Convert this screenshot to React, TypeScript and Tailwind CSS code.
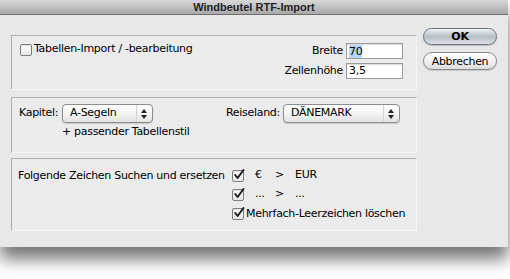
import React from "react";

const font = { fontFamily: '"DejaVu Sans", "Liberation Sans", sans-serif' };

const Checkbox = ({ checked }: { checked?: boolean }) => (
  <span className="relative inline-block w-[12px] h-[12px] shrink-0 rounded-[2px] border border-[#7d7d7d] bg-gradient-to-b from-white to-[#e6e6e6] shadow-[inset_0_1px_1px_rgba(0,0,0,0.12)]">
    {checked && (
      <svg viewBox="0 0 12 12" className="absolute left-[0px] top-[-2px] w-[12px] h-[12px] overflow-visible">
        <path d="M2.2 6 L4.6 9 L10.5 1" fill="none" stroke="#1e1e1e" strokeWidth="2" strokeLinecap="round" strokeLinejoin="round" />
      </svg>
    )}
  </span>
);

const Popup = ({ value, width }: { value: string; width: string }) => (
  <div className={`flex items-center h-[19px] ${width} rounded-[4px] border border-[#8c8c8c] bg-gradient-to-b from-white via-[#f4f4f4] to-[#e2e2e2] shadow-[0_1px_1px_rgba(0,0,0,0.15)]`}>
    <span className="flex-1 pl-[7px]">{value}</span>
    <span className="flex flex-col items-center justify-center gap-[2px] w-[15px] h-full mr-[1px] border-l border-[#d4d4d4]">
      <svg viewBox="0 0 6 4" className="w-[6px] h-[4px]"><path d="M3 0 L6 4 L0 4 Z" fill="#222" /></svg>
      <svg viewBox="0 0 6 4" className="w-[6px] h-[4px]"><path d="M0 0 L6 0 L3 4 Z" fill="#222" /></svg>
    </span>
  </div>
);

const Group = ({ className, children }: { className: string; children: React.ReactNode }) => (
  <div className={`border-t border-l border-t-[#b3b3b3] border-l-[#adadad] border-r border-b border-r-[#f6f6f6] border-b-[#f6f6f6] bg-[#ebebeb] ${className}`}>
    {children}
  </div>
);

export default function App() {
  return (
    <div className="w-[510px] h-[279px] bg-white overflow-hidden" style={font}>
      <div className="w-[508px] h-[247px] flex flex-col bg-[#e8e8e8] shadow-[0_12px_16px_rgba(0,0,0,0.55)]">
        {/* Title bar */}
        <div className="h-[15px] shrink-0 flex items-center justify-center bg-gradient-to-b from-[#d8d8d8] to-[#a9a9a9] border-b border-[#6f6f6f]">
          <span className="text-[11px] font-bold text-[#222] leading-none" style={{ fontFamily: '"Liberation Sans", Arial, sans-serif' }}>
            Windbeutel RTF-Import
          </span>
        </div>

        {/* Body */}
        <div className="flex pl-[11px] text-[11px] tracking-[-0.3px] text-black whitespace-nowrap">
          <div className="w-[406px] pt-[20px] flex flex-col">
            <Group className="h-[55px] flex justify-between pt-[7px] pl-[8px] pr-[13px]">
              <label className="flex items-center gap-[2px] h-[13px]">
                <Checkbox />
                <span>Tabellen-Import / -bearbeitung</span>
              </label>
              <div className="self-start grid grid-cols-[auto_57px] gap-x-[3px] gap-y-[3px] items-center">
                <span className="text-right">Breite</span>
                <div className="h-[16px] border border-[#9a9a9a] bg-white flex items-center pl-[2px] shadow-[inset_0_1px_1px_rgba(0,0,0,0.15)]">
                  <span className="bg-[#b5d5ff] leading-[13px]">70</span>
                </div>
                <span className="text-right">Zellenhöhe</span>
                <div className="h-[16px] border border-[#9a9a9a] bg-white flex items-center pl-[2px] shadow-[inset_0_1px_1px_rgba(0,0,0,0.15)]">
                  <span>3,5</span>
                </div>
              </div>
            </Group>

            <Group className="h-[56px] mt-[7px] pt-[6px] pl-[7px]">
              <div className="flex items-center">
                <span className="w-[43px]">Kapitel:</span>
                <Popup value="A-Segeln" width="w-[91px]" />
                <span className="ml-[73px] w-[57px]">Reiseland:</span>
                <Popup value="DÄNEMARK" width="w-[117px]" />
              </div>
              <div className="ml-[43px] mt-[1px] leading-[16px]">+ passender Tabellenstil</div>
            </Group>

            <Group className="h-[73px] mt-[5px] pt-[7px] pl-[6px]">
              <div className="flex">
                <span className="w-[214px] leading-[19px]">Folgende Zeichen Suchen und ersetzen</span>
                <div className="flex flex-col">
                  <div className="flex items-center h-[19px]">
                    <Checkbox checked />
                    <span className="ml-[11px] w-[20px]">€</span>
                    <span className="w-[20px]">&gt;</span>
                    <span>EUR</span>
                  </div>
                  <div className="flex items-center h-[19px]">
                    <Checkbox checked />
                    <span className="ml-[11px] w-[20px]">...</span>
                    <span className="w-[20px]">&gt;</span>
                    <span>...</span>
                  </div>
                  <div className="flex items-center h-[20px] gap-[2px]">
                    <Checkbox checked />
                    <span>Mehrfach-Leerzeichen löschen</span>
                  </div>
                </div>
              </div>
            </Group>
          </div>

          {/* Buttons */}
          <div className="ml-[6px] pt-[13px] flex flex-col gap-[7px]">
            <button className="w-[74px] h-[17px] rounded-full border border-[#6b7280] bg-gradient-to-b from-[#eef1f5] via-[#b9bec6] to-[#dde1e6] font-bold leading-none shadow-[0_1px_1px_rgba(0,0,0,0.2)]">
              OK
            </button>
            <button className="w-[74px] h-[18px] rounded-full border border-[#8a8a8a] bg-gradient-to-b from-white via-[#f2f2f2] to-[#dcdcdc] leading-none shadow-[0_1px_1px_rgba(0,0,0,0.15)]">
              Abbrechen
            </button>
          </div>
        </div>
      </div>
    </div>
  );
}
